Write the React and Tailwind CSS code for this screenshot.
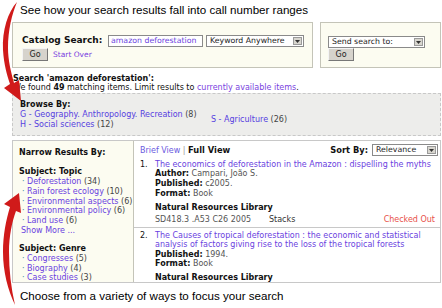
import React from "react";

const V = "font-['DejaVu_Sans',Verdana,sans-serif]";
const LINK = "text-[#6a3fe0]";

function Select({ label, w }) {
  return (
    <div className={`flex items-center h-[12px] border border-[#8a8a8a] bg-white ${w}`}>
      <span className="flex-1 pl-[3px] text-[7.8px] leading-[10px] text-[#222] whitespace-nowrap overflow-hidden">{label}</span>
      <span className="w-[9px] h-[8px] mr-[1px] bg-[#d8d6cf] border border-[#9a9a9a] flex items-center justify-center">
        <svg width="5" height="3" viewBox="0 0 5 3"><path d="M0 0h5L2.5 3z" fill="#333" /></svg>
      </span>
    </div>
  );
}

function GoBtn() {
  return (
    <div className="w-[26px] h-[13px] bg-[#d6d3cc] border border-t-[#f4f4f4] border-l-[#f4f4f4] border-r-[#777] border-b-[#777] flex items-center justify-center text-[8px] text-[#222]">
      Go
    </div>
  );
}

function Item({ t, n }) {
  return (
    <div className="flex h-[9.8px] items-center whitespace-nowrap">
      <span className="w-[8px] pl-[3px] text-[#3a8a9a]">·</span>
      <span className={LINK}>{t}</span>
      <span className="text-[#444]">&nbsp;({n})</span>
    </div>
  );
}

export default function App() {
  return (
    <div className={`relative w-[442px] h-[308px] bg-white overflow-hidden ${V} text-[8px] text-[#111]`}>
      <div className="h-[22px] pl-[20px] pt-[3px] font-['Liberation_Sans',Arial,sans-serif] text-[11.6px] leading-[14px] text-black whitespace-nowrap">
        See how your search results fall into call number ranges
      </div>

      <div className="flex ml-[12px] h-[46px] gap-[7px]">
        <div className="w-[301px] h-full border border-[#c4c4b8] bg-[#fcfcf1] pl-[9px] pt-[12px]">
          <div className="flex items-center h-[12px]">
            <span className="font-bold text-[9px] w-[86px] whitespace-nowrap">Catalog Search:</span>
            <div className="w-[95px] h-[12px] border border-[#8a8a8a] bg-white pl-[2px] text-[7.8px] leading-[10px] text-[#6a3fe0] whitespace-nowrap overflow-hidden">amazon deforestation</div>
            <div className="ml-[3px]"><Select label="Keyword Anywhere" w="w-[98px]" /></div>
          </div>
          <div className="flex items-center mt-[1px]">
            <GoBtn />
            <span className="ml-[5px] text-[#7a3fe0] text-[7.5px]">Start Over</span>
          </div>
        </div>
        <div className="w-[121px] h-full border border-[#c4c4b8] bg-[#fcfcf1] pl-[7px] pt-[13px]">
          <Select label="Send search to:" w="w-[97px]" />
          <GoBtn />
        </div>
      </div>

      <div className="ml-[13px] mt-[6px] leading-[9px] whitespace-nowrap">
        <div className="font-bold text-[8px]">Search 'amazon deforestation':</div>
        <div>
          We found <b>49</b> matching items. Limit results to <span className="text-[#7a3fe0]">currently available items</span>.
        </div>
      </div>

      <div className="ml-[12px] mt-[1px] w-[429px] h-[43px] border border-dashed border-[#c8c8c8] bg-[#ededeb] pl-[7px] pt-[6px] leading-[10px]">
        <div className="font-bold">Browse By:</div>
        <div className="flex items-center">
          <div className="w-[191px] whitespace-nowrap">
            <div><span className="text-[#5540e0]">G - Geography. Anthropology. Recreation</span> <span className="text-[#444]">(8)</span></div>
            <div><span className="text-[#5540e0]">H - Social sciences</span> <span className="text-[#444]">(12)</span></div>
          </div>
          <div className="whitespace-nowrap"><span className="text-[#5540e0]">S - Agriculture</span> <span className="text-[#444]">(26)</span></div>
        </div>
      </div>

      <div className="flex ml-[12px] mt-[4px] w-[429px] h-[143px] border border-[#c8c8c8]">
        <div className="w-[121px] h-full bg-[#fcfcf1] border-r border-[#c4c4b8] pl-[6px] pt-[7px] leading-[10px]">
          <div className="font-bold text-[8px]">Narrow Results By:</div>
          <div className="font-bold mt-[9px]">Subject: Topic</div>
          <Item t="Deforestation" n="34" />
          <Item t="Rain forest ecology" n="10" />
          <Item t="Environmental aspects" n="6" />
          <Item t="Environmental policy" n="6" />
          <Item t="Land use" n="6" />
          <div className={`${LINK} pl-[2px]`}>Show More ...</div>
          <div className="font-bold mt-[8px]">Subject: Genre</div>
          <Item t="Congresses" n="5" />
          <Item t="Biography" n="4" />
          <Item t="Case studies" n="3" />
        </div>
        <div className="flex-1 flex flex-col">
          <div className="flex items-center justify-between h-[18px] pl-[6px] pr-[2px] pt-[1px]">
            <div className="whitespace-nowrap"><span className="text-[#6a5ae0]">Brief View</span> <span className="text-[#999]">|</span> <b className="text-[8.3px]">Full View</b></div>
            <div className="flex items-center gap-[4px]">
              <b className="text-[8.3px]">Sort By:</b>
              <Select label="Relevance" w="w-[66px]" />
            </div>
          </div>
          <div className="h-[70px] border-b border-[#c8c8c8] pt-[1px] leading-[9.7px]">
            <div className="flex">
              <span className="w-[21px] pl-[6px]">1.</span>
              <div className="flex-1">
                <div className={`${LINK} whitespace-nowrap`}>The economics of deforestation in the Amazon : dispelling the myths</div>
                <div><b>Author:</b> <span className="text-[#555]">Campari, João S.</span></div>
                <div><b>Published:</b> <span className="text-[#555]">c2005.</span></div>
                <div><b>Format:</b> <span className="text-[#555]">Book</span></div>
                <div className="font-bold mt-[4px]">Natural Resources Library</div>
                <div className="flex mt-[3px] pr-[5px]">
                  <span className="w-[114px] text-[#555]">SD418.3 .A53 C26 2005</span>
                  <span className="text-[#333]">Stacks</span>
                  <span className="ml-auto text-[#e8504a]">Checked Out</span>
                </div>
              </div>
            </div>
          </div>
          <div className="pt-[3px] leading-[9.5px]">
            <div className="flex">
              <span className="w-[21px] pl-[6px]">2.</span>
              <div className="flex-1 pr-[6px]">
                <div className={LINK}>The Causes of tropical deforestation : the economic and statistical analysis of factors giving rise to the loss of the tropical forests</div>
                <div><b>Published:</b> <span className="text-[#555]">1994.</span></div>
                <div><b>Format:</b> <span className="text-[#555]">Book</span></div>
                <div className="font-bold mt-[4px]">Natural Resources Library</div>
              </div>
            </div>
          </div>
        </div>
      </div>

      <div className="pl-[20px] mt-[6px] font-['Liberation_Sans',Arial,sans-serif] text-[11.6px] leading-[14px] text-black whitespace-nowrap">
        Choose from a variety of ways to focus your search
      </div>

      <svg className="absolute left-0 top-0" width="40" height="308" viewBox="0 0 40 308">
        <path d="M17,2 C8,12 2,30 3,50 C4,65 7,75 10,84 L4,88 L21,101 L19,80 L14,83 C11,72 8,60 8,48 C8,30 12,14 17,2 Z" fill="#d01a1a" />
        <path d="M19,193 L4,204 L10,207 C6,220 3,235 3,252 C3,272 8,290 15,305 C11,288 9,270 9,252 C9,236 12,222 16,211 L21,213 Z" fill="#d01a1a" />
      </svg>
    </div>
  );
}
